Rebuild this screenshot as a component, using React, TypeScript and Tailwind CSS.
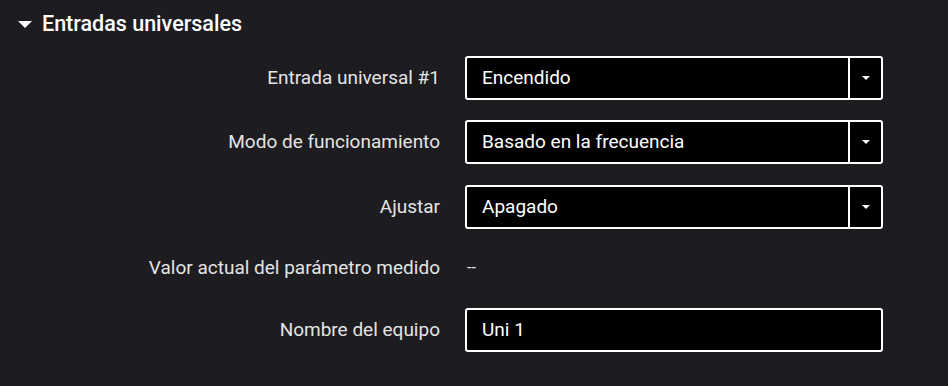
const font = { fontFamily: "Roboto, 'Noto Sans', sans-serif" };

function Caret({ className }: { className: string }) {
  return (
    <svg className={className} viewBox="0 0 10 5" aria-hidden="true">
      <path d="M0 0h10L5 5z" fill="currentColor" />
    </svg>
  );
}

function SelectField({ value }: { value: string }) {
  return (
    <div className="flex h-[44px] w-[418px] items-stretch rounded-[3px] border-2 border-white bg-black">
      <div className="flex flex-1 items-center pl-[15px] text-[19px] text-white">{value}</div>
      <div className="flex w-[33px] items-center justify-center border-l-2 border-white">
        <Caret className="h-[4px] w-[8px] text-white" />
      </div>
    </div>
  );
}

function TextInput({ value }: { value: string }) {
  return (
    <div className="flex h-[44px] w-[418px] items-center rounded-[3px] border-2 border-white bg-black pl-[15px] text-[19px] text-white">
      {value}
    </div>
  );
}

function Row({ label, children, height = "h-[44px]" }: { label: string; children: React.ReactNode; height?: string }) {
  return (
    <div className={`flex items-center ${height}`}>
      <div className="w-[440px] text-right text-[19px] text-[#e4e4e4]">{label}</div>
      <div className="ml-[25px]">{children}</div>
    </div>
  );
}

export default function App() {
  return (
    <div className="h-[386px] w-[948px] overflow-hidden bg-[#1c1c21]" style={font}>
      <div className="flex h-[50px] items-center pb-[2px] pl-[18px]">
        <Caret className="h-[7px] w-[14px] text-white" />
        <span className="ml-[10px] text-[21.5px] font-medium text-white">Entradas universales</span>
      </div>
      <div className="mt-[6px] flex flex-col">
        <Row label="Entrada universal #1">
          <SelectField value="Encendido" />
        </Row>
        <div className="h-[20px]" />
        <Row label="Modo de funcionamiento">
          <SelectField value="Basado en la frecuencia" />
        </Row>
        <div className="h-[21px]" />
        <Row label="Ajustar">
          <SelectField value="Apagado" />
        </Row>
        <div className="h-[20px]" />
        <Row label="Valor actual del parámetro medido" height="h-[38px]">
          <span className="pl-[2px] text-[16px] text-[#e4e4e4]">--</span>
        </Row>
        <div className="h-[21px]" />
        <Row label="Nombre del equipo">
          <TextInput value="Uni 1" />
        </Row>
      </div>
    </div>
  );
}
